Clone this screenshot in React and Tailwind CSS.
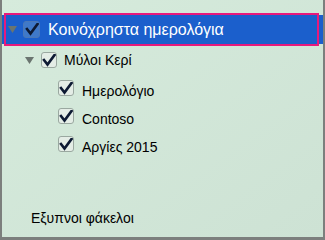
function Check({ selected }) {
  return (
    <span
      className={
        selected
          ? "flex h-[17px] w-[17px] items-center justify-center rounded-[3px] border border-[#4a78b8] bg-[#3f79c9]"
          : "flex h-[16px] w-[16px] items-center justify-center rounded-[3px] border border-[#9aa8a0] bg-[#e4ede6]"
      }
    >
      <svg width="14" height="13" viewBox="0 0 14 13" fill="none">
        <path d="M2 6 L5.5 10.5 L12.5 1" stroke="#0d1a33" strokeWidth="2.6" strokeLinecap="square" />
      </svg>
    </span>
  );
}

function Arrow() {
  return (
    <svg width="9" height="7" viewBox="0 0 9 7">
      <path d="M0 0 H9 L4.5 7 Z" fill="#6b7570" />
    </svg>
  );
}

export default function App() {
  return (
    <div
      className="h-[240px] w-[325px] overflow-hidden border-x-2 border-b-[3px] border-[#7c7f7d] bg-gradient-to-br from-[#d6ebdc] to-[#cde2d4] text-black"
      style={{ fontFamily: '"Liberation Sans", Arial, sans-serif' }}
    >
      <div className="pt-[15px]">
        <div className="relative flex h-[29px] items-center bg-[#1b5fcc] pl-[6px]">
          <div className="pointer-events-none absolute left-[2px] right-[4px] top-[-2px] bottom-[-2px] border-2 border-[#e8197c]" />
          <Arrow />
          <span className="ml-[6px]"><Check selected /></span>
          <span className="ml-[8px] text-[16px] text-white">Κοινόχρηστα ημερολόγια</span>
        </div>

        <div className="mt-[2px] flex flex-col">
          <div className="flex h-[28px] items-center pl-[23px]">
            <Arrow />
            <span className="ml-[7px]"><Check /></span>
            <span className="ml-[7px] text-[14px]">Μύλοι Κερί</span>
          </div>
          <div className="flex h-[28px] items-center pl-[56px]">
            <Check />
            <span className="ml-[8px] mt-[6px] text-[14px]">Ημερολόγιο</span>
          </div>
          <div className="flex h-[28px] items-center pl-[56px]">
            <Check />
            <span className="ml-[8px] mt-[6px] text-[14px]">Contoso</span>
          </div>
          <div className="flex h-[28px] items-center pl-[56px]">
            <Check />
            <span className="ml-[8px] mt-[6px] text-[14px]">Αργίες 2015</span>
          </div>
        </div>

        <div className="mt-[50px] pl-[29px] text-[14px]">Εξυπνοι φάκελοι</div>
      </div>
    </div>
  );
}
